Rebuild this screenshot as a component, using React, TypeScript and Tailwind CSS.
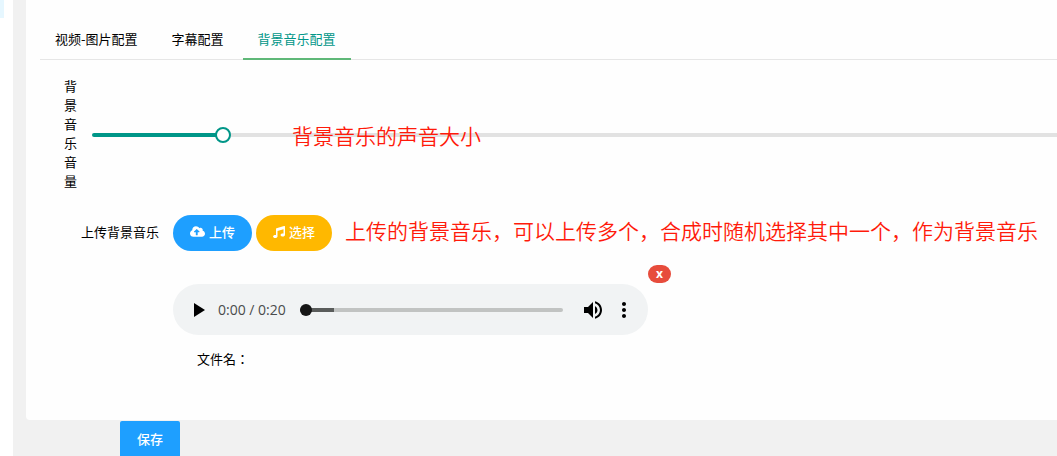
import { useState } from "react";
import { FaCloudUploadAlt, FaMusic } from "react-icons/fa";
import { MdMoreVert, MdPlayArrow, MdVolumeUp } from "react-icons/md";

const tabs = ["视频-图片配置", "字幕配置", "背景音乐配置"];

function VolumeSlider() {
  const [volume, setVolume] = useState(13);
  const track = `linear-gradient(to right, #009688 ${volume}%, #e2e2e2 ${volume}%)`;

  return (
    <div className="relative flex flex-1 items-center">
      <input
        id="volume"
        type="range"
        value={volume}
        onChange={(e) => setVolume(Number(e.target.value))}
        style={{ background: track }}
        className="h-1 w-full cursor-pointer appearance-none rounded-l-full [&::-webkit-slider-thumb]:h-4 [&::-webkit-slider-thumb]:w-4 [&::-webkit-slider-thumb]:appearance-none [&::-webkit-slider-thumb]:rounded-full [&::-webkit-slider-thumb]:border-2 [&::-webkit-slider-thumb]:border-solid [&::-webkit-slider-thumb]:border-[#009688] [&::-webkit-slider-thumb]:bg-white"
      />
      <span className="pointer-events-none absolute left-[200px] text-[21px] leading-7 font-[350] text-[#ff1a0a]">
        背景音乐的声音大小
      </span>
    </div>
  );
}

function AudioPlayer() {
  const [position, setPosition] = useState(0);

  return (
    <div className="flex h-[51px] w-[475px] items-center rounded-full bg-[#f1f3f4] pl-[13px] text-black">
      <button type="button" aria-label="播放">
        <MdPlayArrow className="h-6 w-6" />
      </button>
      <span className="ml-2 font-['Open_Sans',sans-serif] text-sm whitespace-nowrap text-[#4a4b4c]">
        0:00 / 0:20
      </span>
      <input
        type="range"
        aria-label="播放进度"
        value={position}
        onChange={(e) => setPosition(Number(e.target.value))}
        className="ml-[14px] h-1 flex-1 appearance-none rounded-full bg-linear-to-r from-[#5a5c5b] from-13% to-[#c1c3c2] to-13% [&::-webkit-slider-thumb]:h-3 [&::-webkit-slider-thumb]:w-3 [&::-webkit-slider-thumb]:appearance-none [&::-webkit-slider-thumb]:rounded-full [&::-webkit-slider-thumb]:bg-[#161616]"
      />
      <button type="button" aria-label="静音" className="ml-[18px]">
        <MdVolumeUp className="h-6 w-6" />
      </button>
      <button type="button" aria-label="更多" className="mr-3 ml-[7px]">
        <MdMoreVert className="h-6 w-6" />
      </button>
    </div>
  );
}

export default function App() {
  const [active, setActive] = useState(2);

  return (
    <div className="flex min-h-screen overflow-hidden bg-[#f1f1f1] font-['Noto_Sans_CJK_SC',sans-serif] text-[13px] leading-[19px] text-black">
      {/* Side menu edge */}
      <div className="w-[13px] shrink-0 bg-white">
        <div className="h-[18px] w-1 bg-[#e6f7ff]" />
      </div>

      <main className="min-w-0 flex-1 pl-[13px]">
        <section className="rounded-bl bg-[#fefefe] pt-5 pb-[52px] pl-[14px]">
          <nav className="flex gap-1 border-b border-[#e6e6e6]">
            {tabs.map((tab, index) => (
              <button
                key={tab}
                type="button"
                onClick={() => setActive(index)}
                className={`-mb-px h-10 border-b-2 px-[15px] pb-0.5 ${
                  index === active ? "border-[#5fb878] text-[#009688]" : "border-transparent"
                }`}
              >
                {tab}
              </button>
            ))}
          </nav>

          {/* Volume */}
          <div className="mt-4 flex pl-6">
            <label htmlFor="volume" className="mr-[15px] w-[13px] pb-1 break-all">
              背景音乐音量
            </label>
            <VolumeSlider />
          </div>

          {/* Upload */}
          <div className="mt-[21px] flex items-center">
            <span className="w-[133px] pr-[14px] pb-1 text-right">上传背景音乐</span>
            <button type="button" className="flex h-9 items-center gap-1 rounded-full bg-[#1e9fff] px-[17px] pb-[3px] font-medium text-white">
              <FaCloudUploadAlt className="h-[15px] w-[15px]" />
              上传
            </button>
            <button type="button" className="ml-1 flex h-9 items-center gap-1 rounded-full bg-[#ffb800] px-[17px] pb-[3px] font-medium text-white">
              <FaMusic className="h-3 w-3" />
              选择
            </button>
            <span className="ml-[13px] pb-1.5 text-[21px] leading-7 font-[350] whitespace-nowrap text-[#ff1a0a]">
              上传的背景音乐，可以上传多个，合成时随机选择其中一个，作为背景音乐
            </span>
          </div>

          {/* Uploaded file */}
          <div className="mt-[14px] ml-[133px]">
            <button
              type="button"
              aria-label="删除"
              className="mb-px ml-[475px] block h-[18px] w-[23px] rounded-full bg-[#e74c3c] font-['Open_Sans',sans-serif] text-xs leading-4 font-bold text-white"
            >
              x
            </button>
            <AudioPlayer />
            <p className="mt-[14px] pl-6 font-['Noto_Sans_CJK_JP',sans-serif]">文件名：</p>
          </div>
        </section>

        <button type="button" className="mt-px ml-[94px] block h-9 rounded-t-xs bg-[#1e9fff] px-[17px] pb-0.5 font-medium text-white">
          保存
        </button>
      </main>
    </div>
  );
}
